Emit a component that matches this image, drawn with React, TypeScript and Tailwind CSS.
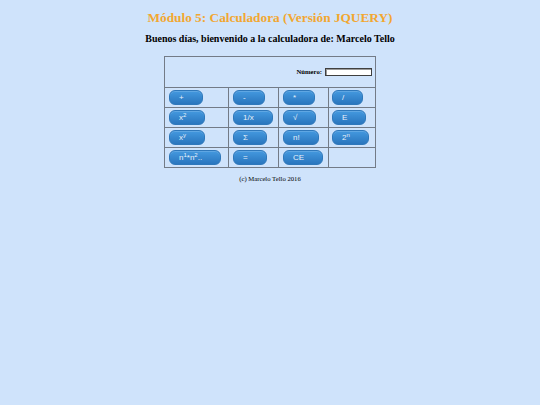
import React from 'react'

type Key = { label: React.ReactNode }

const rows: Key[][] = [
  [{ label: '+' }, { label: '-' }, { label: '*' }, { label: '/' }],
  [
    { label: <>x<sup>2</sup></> },
    { label: '1/x' },
    { label: '√' },
    { label: 'E' },
  ],
  [
    { label: <>x<sup>y</sup></> },
    { label: 'Σ' },
    { label: 'n!' },
    { label: <>2<sup>n</sup></> },
  ],
  [
    { label: <>n<sup>1</sup>*n<sup>2</sup>..</> },
    { label: '=' },
    { label: 'CE' },
  ],
]

function CalcButton({ children }: { children: React.ReactNode }) {
  return (
    <button
      type="button"
      className="flex h-[15px] items-center rounded-[6px] border border-[#2f78bb] bg-linear-to-b from-[#4499df] to-[#2a76be] pl-[9px] pr-[18px] font-['Liberation_Sans',Arial,sans-serif] text-[8px] leading-none text-[#e8f1fa] shadow-[inset_0_1px_0_rgba(255,255,255,0.15)]"
    >
      {children}
    </button>
  )
}

export default function App() {
  return (
    <div className="min-h-[405px] w-full bg-[#cfe3fb] font-['Liberation_Serif','Times_New_Roman',serif]">
      <div className="flex flex-col items-center">
        <h1 className="mt-[10px] text-[13.3px] font-bold leading-[15px] text-[#f2a731]">
          Módulo 5: Calculadora (Versión JQUERY)
        </h1>
        <h2 className="mt-[8px] text-[10px] font-bold leading-[12px] text-black">
          Buenos días, bienvenido a la calculadora de: Marcelo Tello
        </h2>

        {/* calculator grid */}
        <div className="mt-[11px] grid grid-cols-[64px_50px_50px_47px] border-l border-t border-[#737b87]">
          <div className="col-span-4 flex h-[31px] items-center justify-end border-b border-r border-[#737b87] pr-[3px]">
            <span className="mr-[3px] text-[6.7px] font-bold text-black">Número:</span>
            <input
              type="text"
              className="h-[8px] w-[47px] border border-[#3f3f3f] bg-white outline-none shadow-[inset_1px_1px_0_#9a9a9a]"
            />
          </div>

          {rows.map((row, r) =>
            [0, 1, 2, 3].map((c) => (
              <div
                key={`${r}-${c}`}
                className={`flex h-[20px] items-center border-b border-r border-[#737b87] ${c === 3 ? 'pl-[3px]' : 'pl-[4px]'}`}
              >
                {row[c] && <CalcButton>{row[c].label}</CalcButton>}
              </div>
            ))
          )}
        </div>

        <p className="mt-[7px] text-[6.7px] leading-[8px] text-black">(c) Marcelo Tello 2016</p>
      </div>
    </div>
  )
}
